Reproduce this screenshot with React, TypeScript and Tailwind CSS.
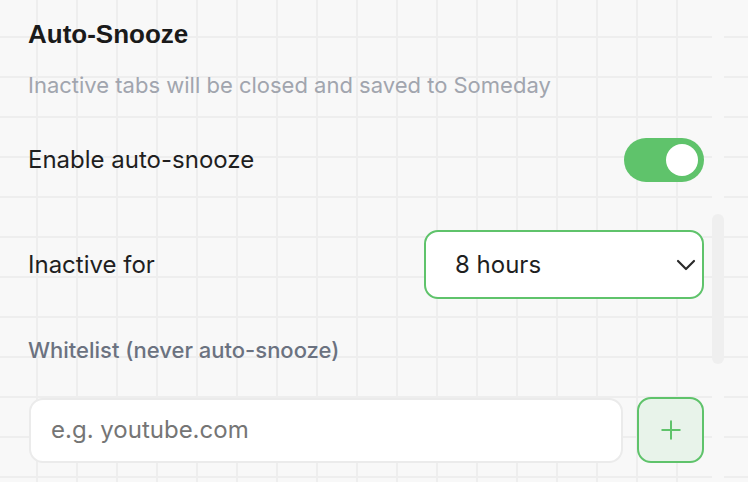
import { ChevronDown, Plus } from "lucide-react";

export default function App() {
  return (
    <div className="w-[748px] h-[482px] overflow-hidden flex bg-[#f8f8f8] bg-[linear-gradient(to_right,#eeeeee_2px,transparent_2px),linear-gradient(to_bottom,#eeeeee_2px,transparent_2px)] bg-size-[40px_40px] bg-position-[36px_36px] font-['Inter',sans-serif]">
      <div className="w-[712px] flex flex-col pl-[28px] pr-[8px] pt-[18px]">
        <h2 className="h-[32px] leading-[32px] text-[26px] font-bold text-[#1a1a1a] font-['Liberation_Sans',sans-serif]">
          Auto-Snooze
        </h2>
        <p className="mt-[21px] h-[28px] leading-[28px] text-[22px] text-[#a1a5ae]">
          Inactive tabs will be closed and saved to Someday
        </p>

        <div className="mt-[39px] h-[44px] flex items-center justify-between">
          <span className="text-[24px] text-[#1f1f1f]">Enable auto-snooze</span>
          <div className="w-[80px] h-[44px] rounded-full bg-[#5fc36b] flex items-center justify-end pr-[6px]">
            <div className="w-[32px] h-[32px] rounded-full bg-white" />
          </div>
        </div>

        <div className="mt-[48px] h-[69px] flex items-center justify-between">
          <span className="text-[24px] text-[#1f1f1f]">Inactive for</span>
          <div className="w-[280px] h-[69px] rounded-[14px] border-2 border-[#5fc36b] bg-white flex items-center justify-between pl-[29px] pr-[0px]">
            <span className="text-[24px] text-[#1f1f1f]">8 hours</span>
            <ChevronDown size={32} strokeWidth={1.6} className="text-[#2a2a2a]" />
          </div>
        </div>

        <p className="mt-[37px] h-[28px] leading-[28px] text-[22px] font-medium text-[#6b7280]">
          Whitelist (never auto-snooze)
        </p>

        <div className="mt-[33px] flex items-center gap-[14px]">
          <div className="flex-1 ml-[1px] h-[65px] rounded-[14px] border-2 border-[#ebebeb] bg-white flex items-center pl-[20px]">
            <span className="text-[24px] text-[#757575]">e.g. youtube.com</span>
          </div>
          <div className="w-[67px] h-[66px] rounded-[14px] border-2 border-[#5fc36b] bg-[#e8f3ea] flex items-center justify-center">
            <Plus size={30} strokeWidth={1.6} className="text-[#5fc36b]" />
          </div>
        </div>
      </div>

      <div className="w-[12px] h-full bg-[#f8f8f8] pt-[214px]">
        <div className="w-[12px] h-[150px] rounded-full bg-[#efefef]" />
      </div>
    </div>
  );
}
